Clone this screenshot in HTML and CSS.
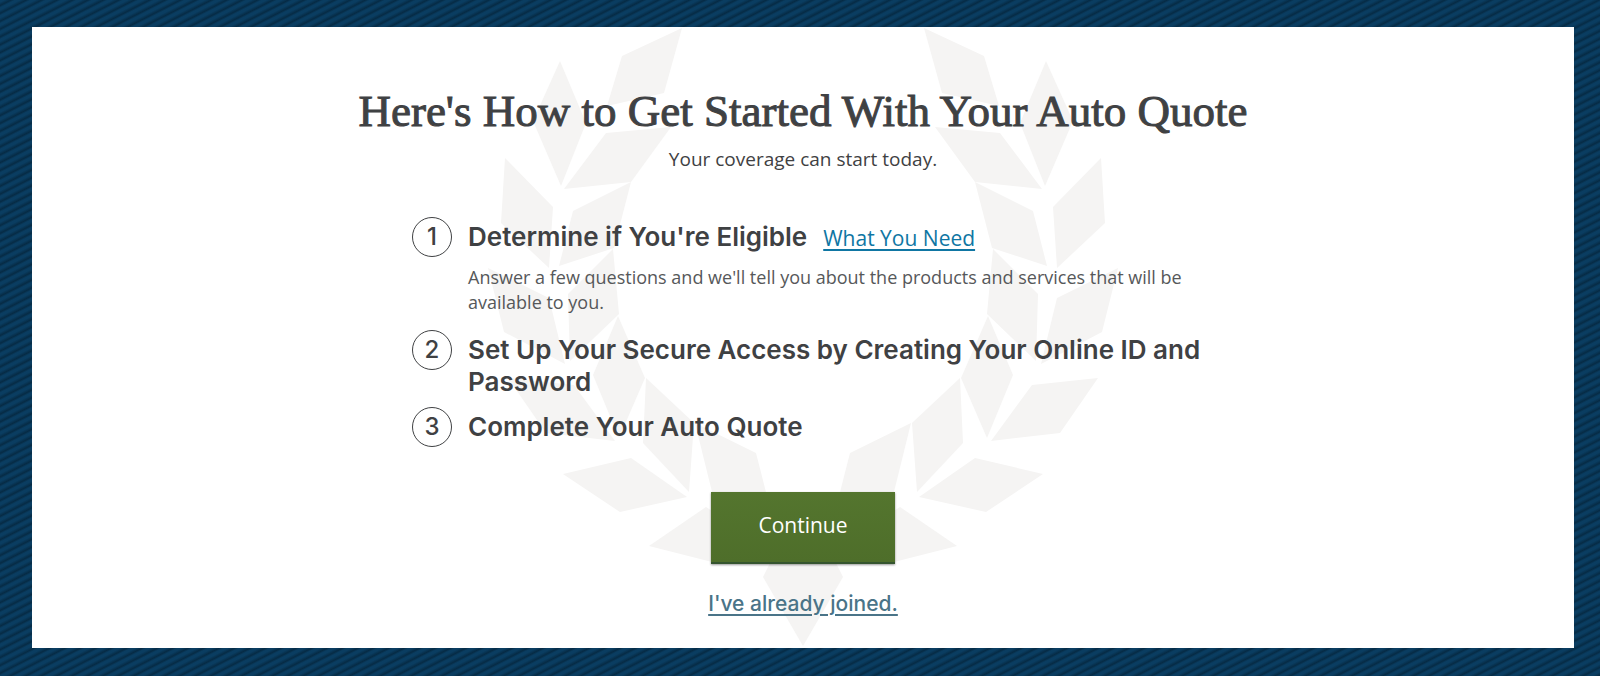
FILE: index.html
```html
<!DOCTYPE html>
<html lang="en">
<head>
<meta charset="utf-8">
<meta name="viewport" content="width=device-width, initial-scale=1">
<title>Auto Quote</title>
<link rel="stylesheet" href="styles.css">
</head>
<body>
<main class="card">
  <svg class="wreath" viewBox="483 27 640 621" aria-hidden="true">
    <defs>
      <g id="branch">
        <path d="M924 28L984 56L999 106L942 93Z"/>
        <path d="M1046 61L1073 121L1045 186L1020 123Z"/>
        <path d="M935 127L1000 133L1042 189L975 182Z"/>
        <path d="M975 182L1033 211L1047 266L992 248Z"/>
        <path d="M1101 158L1105 223L1057 268L1053 207Z"/>
        <path d="M993 249L1038 294L1036 361L987 314Z"/>
        <path d="M1118 268L1102 332L1041 364L1057 298Z"/>
        <path d="M988 316L1013 375L987 438L961 378Z"/>
        <path d="M1098 378L1032 385L991 441L1060 433Z"/>
        <path d="M960 378L963 443L917 492L912 423Z"/>
        <path d="M975 458L1043 474L986 512L919 497Z"/>
        <path d="M911 423L850 453L838 500L892 500Z"/>
        <path d="M900 507L957 546L894 562L850 540Z"/>
      </g>
    </defs>
    <use href="#branch"/>
    <use href="#branch" transform="translate(1606 0) scale(-1 1)"/>
    <path d="M803 646L843 577L836 563H770L763 577Z"/>
  </svg>
  <div class="content">
    <h1 class="title">Here's How to Get Started With Your Auto Quote</h1>
    <p class="subtitle">Your coverage can start today.</p>
    <ol class="steps">
      <li class="step">
        <span class="number">1</span>
        <div class="step-body">
          <div class="step-head">
            <h2 class="step-title">Determine if You're Eligible</h2>
            <a class="need-link" href="#">What You Need</a>
          </div>
          <p class="step-text">Answer a few questions and we'll tell you about the products and services that will be available to you.</p>
        </div>
      </li>
      <li class="step">
        <span class="number">2</span>
        <div class="step-body"><h2 class="step-title">Set Up Your Secure Access by Creating Your Online ID and Password</h2></div>
      </li>
      <li class="step">
        <span class="number">3</span>
        <div class="step-body"><h2 class="step-title">Complete Your Auto Quote</h2></div>
      </li>
    </ol>
    <button class="continue" type="button">Continue</button>
    <a class="joined" href="#">I've already joined.</a>
  </div>
</main>
</body>
</html>
```
FILE: styles.css
```css
* {
  box-sizing: border-box;
}

body {
  margin: 0;
  padding: 27px 26px 28px 32px;
  background: repeating-linear-gradient(153deg, #0a3d61 0, #0a3d61 2px, #062b45 5px, #0a3d61 7px);
  color: #3f4143;
  font-family: "Open Sans", sans-serif;
}

.card {
  display: grid;
  justify-items: center;
  background: #fff;
}

.wreath {
  grid-area: 1 / 1;
  width: 640px;
  max-width: 100%;
  height: 621px;
  fill: #f5f4f3;
}

.content {
  grid-area: 1 / 1;
  z-index: 1;
  display: flex;
  flex-direction: column;
  align-items: center;
  width: 100%;
  padding: 58px 20px 29px;
}

.title {
  margin: 0;
  font: 45px/52px "Liberation Serif", serif;
  text-align: center;
  -webkit-text-stroke: 1px #3f4143;
}

.subtitle {
  margin: 8px 0 0;
  font-size: 19px;
  line-height: 28px;
}

.steps {
  display: flex;
  flex-direction: column;
  gap: 9px;
  width: 100%;
  max-width: 782px;
  margin: 44px 0 0;
  padding: 0;
  list-style: none;
}

.step {
  display: flex;
  gap: 16px;
}

.number {
  display: flex;
  flex: none;
  align-items: center;
  justify-content: center;
  width: 40px;
  height: 40px;
  border: 1px solid #3f4143;
  border-radius: 50%;
  font: 500 24px/32px Inter, sans-serif;
}

.step-body {
  margin-right: -12px;
  padding-top: 4px;
}

.step-head {
  display: flex;
  flex-wrap: wrap;
  align-items: baseline;
  gap: 0 16px;
}

.step-title {
  margin: 0;
  font: 600 26px/32px Inter, sans-serif;
}

.need-link {
  color: #0f76a3;
  font-size: 21px;
  line-height: 30px;
  text-underline-offset: 3px;
}

.step-text {
  margin: 12px 0 6px;
  color: #56585a;
  font-size: 18px;
  line-height: 25px;
}

.continue {
  width: 184px;
  height: 72px;
  margin-top: 45px;
  padding: 0 0 4px;
  border: 0;
  border-bottom: 2px solid #35552f;
  background: linear-gradient(#54752e, #4e6e2a);
  box-shadow: 0 1px 2px #00000066;
  color: #fff;
  font: 21px/28px "Open Sans", sans-serif;
}

.joined {
  margin-top: 25px;
  color: #4a7488;
  font: 500 21px/30px Inter, sans-serif;
  text-underline-offset: 3px;
}
```
